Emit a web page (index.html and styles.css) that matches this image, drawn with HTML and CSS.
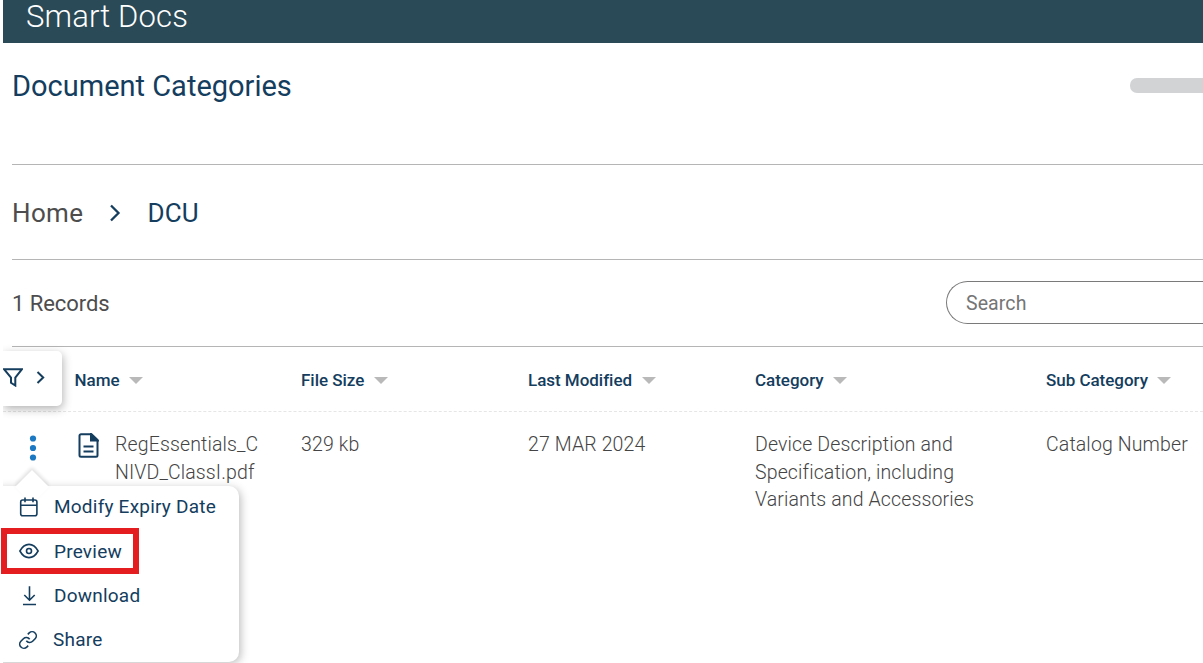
FILE: index.html
```html
<!DOCTYPE html>
<html lang="en">
<head>
    <meta charset="UTF-8">
    <meta name="viewport" content="width=device-width, initial-scale=1.0">
    <title>Smart Docs</title>
    <link rel="stylesheet" href="styles.css">
</head>
<body>
    <div class="app">
        <header class="topbar">Smart Docs</header>

        <main>
            <section class="title-row">
                <h1>Document Categories</h1>
                <div class="progress"></div>
            </section>

            <nav class="breadcrumb">
                <a href="#">Home</a>
                <svg width="12" height="18" viewBox="0 0 12 18"><path d="M2 1.5 9.5 9 2 16.5"/></svg>
                <span class="current">DCU</span>
            </nav>

            <section class="toolbar">
                <span class="records">1 Records</span>
                <input class="search" type="text" placeholder="Search">
            </section>
        </main>

        <!-- Documents table -->
        <section class="table">
            <div class="row head">
                <button class="filter">
                    <svg width="20" height="19" viewBox="0 0 20 19"><path d="M1 1.2h18L12.3 9.5v8L8 14.8V9.5Z"/></svg>
                    <svg width="9" height="13" viewBox="0 0 9 13"><path d="M1.5 1 7.2 6.5 1.5 12"/></svg>
                </button>
                <div class="cell">Name<i class="sort"></i></div>
                <div class="cell">File Size<i class="sort"></i></div>
                <div class="cell">Last Modified<i class="sort"></i></div>
                <div class="cell">Category<i class="sort"></i></div>
                <div class="cell">Sub Category<i class="sort"></i></div>
            </div>
            <div class="row data">
                <div class="actions">
                    <svg class="dots" width="8" height="26" viewBox="0 0 8 26"><circle cx="4" cy="3.5" r="3.1"/><circle cx="4" cy="13" r="3.1"/><circle cx="4" cy="22.5" r="3.1"/></svg>

                    <div class="menu">
                        <a href="#" class="item">
                            <svg viewBox="0 0 20 20"><rect x="1.7" y="3" width="16.2" height="15.8" rx="2"/><path d="M1.7 8.2h16.2M6 .4v4.9M14 .4v4.9"/></svg>
                            Modify Expiry Date
                        </a>
                        <a href="#" class="item">
                            <svg viewBox="0 0 20 20"><path d="M.9 10Q4.500 3.400 10 3.400T19.100 10Q15.500 16.600 10 16.600T.9 10Z"/><circle cx="10" cy="10" r="2.5"/></svg>
                            Preview
                        </a>
                        <a href="#" class="item">
                            <svg viewBox="0 0 20 20"><path d="M10.500 .2v13.800M5.300 9l5.200 5.200L15.700 9M4 18.500h13"/></svg>
                            Download
                        </a>
                        <a href="#" class="item share">
                            <svg viewBox="0 0 24 24"><path d="M10 13a5 5 0 0 0 7.540.540l3-3a5 5 0 0 0-7.070-7.070l-1.720 1.710"/><path d="M14 11a5 5 0 0 0-7.540-.540l-3 3a5 5 0 0 0 7.070 7.070l1.710-1.710"/></svg>
                            Share
                        </a>
                    </div>
                </div>
                <div class="cell file">
                    <svg width="21" height="25" viewBox="0 0 21 25"><path d="M3 1.200h10.500L19.500 7v15.200a1.500 1.500 0 0 1-1.500 1.500H3a1.500 1.500 0 0 1-1.500-1.500V2.700A1.500 1.500 0 0 1 3 1.200Z"/><path class="fold" d="M13 1.200V7.500h6.500Z"/><path d="M5.500 13.500h10M5.500 18.500h10"/></svg>
                    <span>RegEssentials_C<br>NIVD_ClassI.pdf</span>
                </div>
                <div class="cell">329 kb</div>
                <div class="cell">27 MAR 2024</div>
                <div class="cell">Device Description and<br>Specification, including<br>Variants and Accessories</div>
                <div class="cell">Catalog Number</div>
            </div>
        </section>
    </div>
    <div class="highlight"></div>
</body>
</html>
```
FILE: styles.css
```css
* {
    box-sizing: border-box;
}

body {
    margin: 0;
    height: 663px;
    overflow: hidden;
    position: relative;
    font-family: Roboto, "Liberation Sans", sans-serif;
    background-color: #fff;
    color: #4d4d4d;
}

svg {
    display: block;
    flex: none;
    fill: none;
    stroke: #143d5e;
    stroke-width: 2;
}

a {
    color: inherit;
    text-decoration: none;
}

.app {
    margin-left: 3px;
    height: 663px;
    overflow: hidden;
}

.topbar {
    height: 43px;
    padding-left: 23px;
    background-color: #2b4a57;
    color: #fff;
    font-size: 31px;
    font-weight: 300;
    line-height: 34px;
    letter-spacing: 0.15px;
}

main {
    padding-left: 9px;
}

.title-row {
    height: 122px;
    display: flex;
    justify-content: space-between;
    align-items: flex-start;
    border-bottom: 1px solid #b5b5b5;
}

h1 {
    margin: 25px 0 0;
    font-size: 29px;
    font-weight: 400;
    line-height: 36px;
    color: #143d5e;
}

.progress {
    width: 73px;
    height: 15px;
    margin-top: 35px;
    border-radius: 7px 0 0 7px;
    background-color: #d1d3d5;
}

.breadcrumb {
    height: 95px;
    padding-top: 1px;
    display: flex;
    align-items: center;
    border-bottom: 1px solid #b5b5b5;
    font-size: 26px;
    letter-spacing: 0.35px;
}

.breadcrumb svg {
    margin: 0 26px 0 26px;
    stroke-width: 2.3;
}

.current {
    color: #143d5e;
    letter-spacing: 0.2px;
}

.toolbar {
    height: 87px;
    padding-bottom: 1px;
    display: flex;
    justify-content: space-between;
    align-items: center;
    border-bottom: 1px solid #b5b5b5;
}

.records {
    padding-top: 2px;
    font-size: 22px;
    letter-spacing: -0.05px;
}

.search {
    width: 257px;
    height: 43px;
    padding: 2px 0 0 19px;
    border: 1px solid #7a7a7a;
    border-right: 0;
    border-radius: 22px 0 0 22px;
    font-family: inherit;
    font-size: 19.5px;
    letter-spacing: 0.1px;
    outline: none;
}

.search::placeholder {
    color: #757575;
}

.row {
    display: grid;
    grid-template-columns: 71.5px 226.5px 227px 227px 291px 1fr;
}

.head {
    height: 65px;
    border-bottom: 1px dashed #e6e6e6;
    color: #143d5e;
    font-size: 17px;
    font-weight: 500;
    letter-spacing: -0.03px;
}

.head .cell {
    display: flex;
    align-items: center;
    padding-top: 2px;
}

.sort {
    margin-left: 9.5px;
    border: 7px solid transparent;
    border-top-color: #b9b9b9;
    border-bottom-width: 0;
}

.filter {
    width: 59px;
    height: 55px;
    margin: 4px 0 0;
    padding: 0 0 2px;
    display: flex;
    align-items: center;
    gap: 13px;
    border: 0;
    border-radius: 0 5px 5px 0;
    background-color: #fff;
    box-shadow: 1px 3px 10px rgba(0, 0, 0, 0.3);
}

.data {
    padding-top: 19px;
    color: #444;
    font-size: 19.5px;
    font-weight: 350;
    line-height: 27.5px;
    letter-spacing: 0.13px;
}

.file {
    display: flex;
    gap: 16.5px;
}

.file svg {
    margin: 2px 0 0 3px;
}

.fold {
    fill: #143d5e;
}

.actions {
    position: relative;
}

.dots {
    margin: 4px 0 0 26px;
    fill: #1b78c2;
    stroke: none;
}

/* Row actions menu */
.menu {
    position: absolute;
    top: 55px;
    left: -12px;
    width: 248px;
    height: 176px;
    padding: 0 0 0 27.5px;
    z-index: 2;
    border-radius: 10px;
    background-color: #fff;
    box-shadow: 2px 2px 8px rgba(0, 0, 0, 0.25);
    color: #143d5e;
    font-size: 19px;
    font-weight: 400;
    letter-spacing: 0.22px;
}

.menu::before {
    content: '';
    position: absolute;
    top: -11px;
    left: 29px;
    width: 24px;
    height: 24px;
    background-color: #fff;
    box-shadow: -2px -2px 4px rgba(0, 0, 0, 0.12);
    transform: rotate(45deg);
}

.item {
    position: relative;
    height: 44.3px;
    padding-bottom: 2px;
    display: flex;
    align-items: center;
    gap: 15.5px;
}

.item svg {
    width: 20px;
    height: 20px;
    stroke-width: 1.6;
}

.share {
    margin-left: -1px;
}

.share svg {
    stroke-width: 1.9;
}

/* Frame around the Preview item */
.highlight {
    position: absolute;
    top: 528px;
    left: 1px;
    width: 138px;
    height: 46px;
    z-index: 3;
    border: 6px solid #e41e20;
}
```
